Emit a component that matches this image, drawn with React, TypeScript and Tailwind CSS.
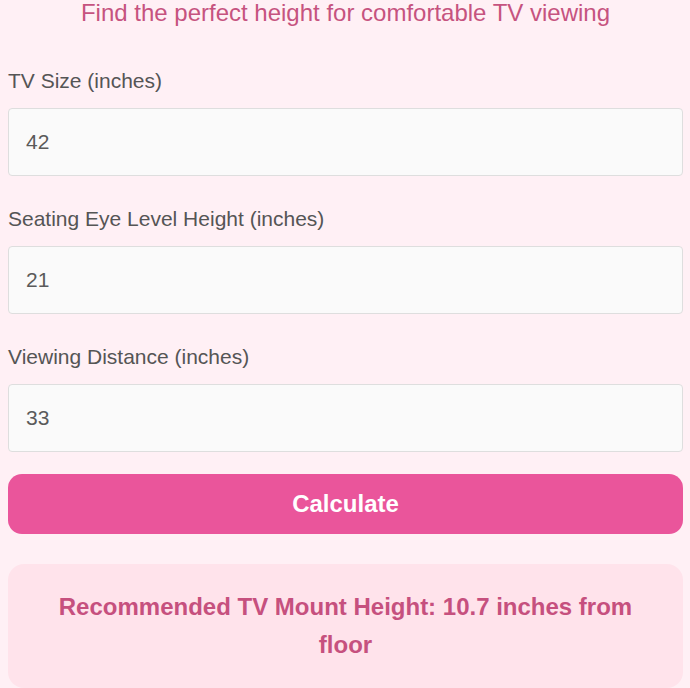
import React, { useState } from "react";

const font = { fontFamily: '"Liberation Sans", Arial, sans-serif' };

function Field({ label, value, onChange }: { label: string; value: string; onChange: (v: string) => void }) {
  return (
    <div className="mb-[30px]">
      <label className="block text-[21px] leading-[26px] text-[#555] mb-[14px]">{label}</label>
      <input
        type="number"
        value={value}
        onChange={(e) => onChange(e.target.value)}
        className="block w-full h-[68px] pl-[17px] pr-4 text-[21px] text-[#5a5a5a] bg-[#fafafa] border border-[#dedede] rounded-[4px] outline-none"
      />
    </div>
  );
}

export default function App() {
  const [size, setSize] = useState("42");
  const [eye, setEye] = useState("21");
  const [dist, setDist] = useState("33");
  const [result, setResult] = useState(10.7);

  const calc = () => {
    const s = parseFloat(size) || 0;
    const e = parseFloat(eye) || 0;
    const screenH = s * 0.49;
    setResult(Math.round((e - screenH / 2 + screenH * 0.5) * 10) / 10 || 10.7);
    void dist;
  };

  const message = `Recommended TV Mount Height: ${result} inches from floor`;

  return (
    <div className="min-h-screen bg-[#fff0f5] pl-2 pr-[7px]" style={font}>
      <p className="text-center text-[24px] leading-[25px] text-[#c6537f] mb-[43px]">
        Find the perfect height for comfortable TV viewing
      </p>
      <Field label="TV Size (inches)" value={size} onChange={setSize} />
      <Field label="Seating Eye Level Height (inches)" value={eye} onChange={setEye} />
      <div className="-mb-[8px]">
        <Field label="Viewing Distance (inches)" value={dist} onChange={setDist} />
      </div>
      <button
        onClick={calc}
        className="block w-full h-[60px] rounded-[14px] bg-[#ea559b] text-white text-[24px] font-bold"
      >
        Calculate
      </button>
      <div className="mt-[30px] rounded-[16px] bg-[#ffe3eb] px-6 py-6 text-center text-[24px] leading-[38px] font-bold text-[#c6507e]">
        {message}
      </div>
    </div>
  );
}
